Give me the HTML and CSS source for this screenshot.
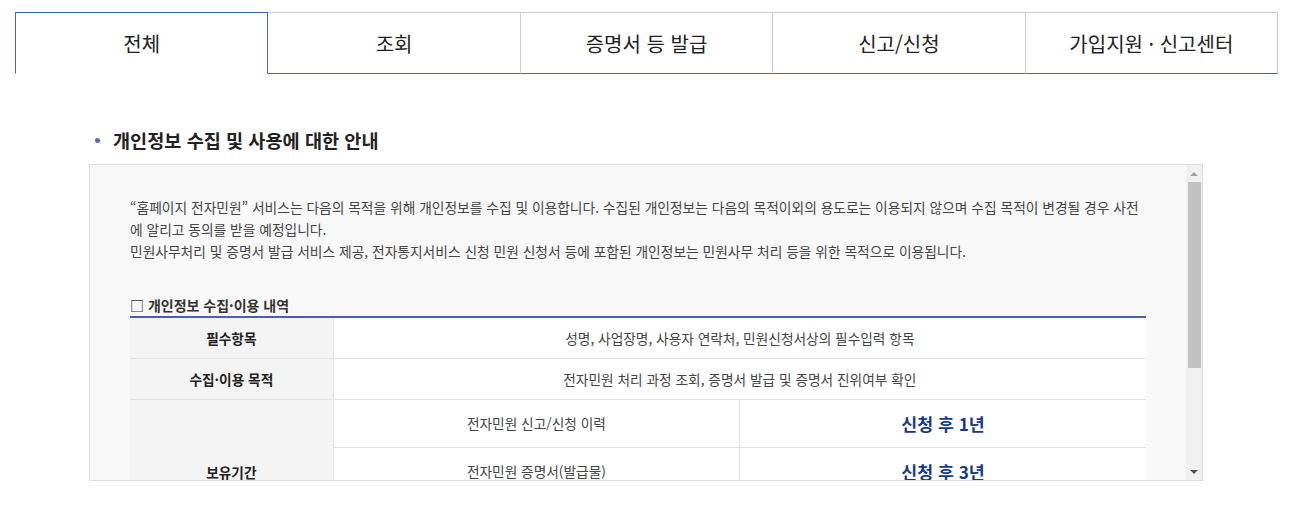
FILE: index.html
```html
<!DOCTYPE html>
<html lang="ko">
<head>
  <meta charset="UTF-8">
  <meta name="viewport" content="width=device-width, initial-scale=1.0">
  <title>개인정보 수집 및 사용에 대한 안내</title>
  <link rel="stylesheet" href="styles.css">
</head>
<body>
  <div class="wrap">
    <ul class="tabs">
      <li class="tab active">전체</li>
      <li class="tab">조회</li>
      <li class="tab">증명서 등 발급</li>
      <li class="tab">신고/신청</li>
      <li class="tab">가입지원 · 신고센터</li>
    </ul>

    <div class="section">
      <h3 class="title"><span class="dot"></span>개인정보 수집 및 사용에 대한 안내</h3>

      <div class="agree-box">
        <div class="agree-scroll">
          <p class="intro">“홈페이지 전자민원” 서비스는 다음의 목적을 위해 개인정보를 수집 및 이용합니다. 수집된 개인정보는 다음의 목적이외의 용도로는 이용되지 않으며 수집 목적이 변경될 경우 사전에 알리고 동의를 받을 예정입니다.<br>
          민원사무처리 및 증명서 발급 서비스 제공, 전자통지서비스 신청 민원 신청서 등에 포함된 개인정보는 민원사무 처리 등을 위한 목적으로 이용됩니다.</p>

          <h4 class="tbl-title">□ 개인정보 수집·이용 내역</h4>
          <table class="tbl">
            <colgroup>
              <col class="c1">
              <col class="c2">
              <col class="c3">
            </colgroup>
            <tbody>
              <tr>
                <th>필수항목</th>
                <td colspan="2">성명, 사업장명, 사용자 연락처, 민원신청서상의 필수입력 항목</td>
              </tr>
              <tr>
                <th>수집·이용 목적</th>
                <td colspan="2">전자민원 처리 과정 조회, 증명서 발급 및 증명서 진위여부 확인</td>
              </tr>
              <tr class="sub">
                <th rowspan="3">보유기간</th>
                <td>전자민원 신고/신청 이력</td>
                <td class="period">신청 후 1년</td>
              </tr>
              <tr class="sub">
                <td>전자민원 증명서(발급물)</td>
                <td class="period">신청 후 3년</td>
              </tr>
              <tr class="sub">
                <td>전자통지서비스 신청 내역</td>
                <td class="period">해지 시까지</td>
              </tr>
            </tbody>
          </table>

          <p class="note">※ 위의 개인정보 수집·이용에 대한 동의를 거부할 권리가 있습니다.<br>
          그러나 동의를 거부할 경우 전자민원 서비스 이용이 제한될 수 있습니다.</p>
        </div>

        <div class="scrollbar">
          <span class="arrow up"></span>
          <div class="track"><span class="thumb"></span></div>
          <span class="arrow down"></span>
        </div>
      </div>
    </div>
  </div>
</body>
</html>
```

FILE: styles.css
```css
* {
  box-sizing: border-box;
}

body {
  margin: 0;
  font-family: "Noto Sans CJK KR", "Noto Sans", sans-serif;
  color: #222;
  background: #fff;
}

.wrap {
  padding: 12px 18px 0 15px;
}

.tabs {
  display: flex;
  list-style: none;
  margin: 0;
  padding: 0;
}

.tab {
  flex: 1 1 0;
  height: 62px;
  display: flex;
  align-items: center;
  justify-content: center;
  font-size: 20px;
  color: #222;
  border-top: 1px solid #ccc;
  border-right: 1px solid #ccc;
  border-bottom: 1px solid #3b67bd;
}

.tab.active {
  border: 1px solid #3b67bd;
  border-bottom-color: #fff;
}

.section {
  margin: 53px 75px 0 74px;
}

.title {
  display: flex;
  align-items: center;
  margin: 0 0 11px;
  padding-left: 6px;
  font-size: 18.6px;
  line-height: 26px;
  font-weight: bold;
  color: #222;
}

.dot {
  width: 5px;
  height: 5px;
  border-radius: 50%;
  background: #5868b4;
  margin-right: 13px;
}

/* agreement box with a drawn scrollbar */
.agree-box {
  display: flex;
  height: 317px;
  border: 1px solid #ddd;
  background: #f8f8f8;
}

.agree-scroll {
  flex: 1;
  overflow: hidden;
  padding: 31px 40px 40px 40px;
}

.scrollbar {
  width: 16px;
  display: flex;
  flex-direction: column;
  background: #f1f1f1;
}

.arrow {
  height: 17px;
  display: flex;
  align-items: center;
  justify-content: center;
}

.arrow::before {
  content: "";
  border-left: 4px solid transparent;
  border-right: 4px solid transparent;
}

.arrow.up::before {
  border-bottom: 4px solid #a3a3a3;
}

.arrow.down::before {
  border-top: 4px solid #505050;
}

.track {
  flex: 1;
  padding: 0 1px 0 2px;
}

.thumb {
  display: block;
  height: 186px;
  background: #c1c1c1;
}

.intro {
  margin: 0;
  font-size: 13.75px;
  line-height: 22px;
  color: #444;
}

.tbl-title {
  margin: 32px 0 0;
  font-size: 14px;
  line-height: 22px;
  font-weight: bold;
  color: #333;
}

.tbl {
  width: 100%;
  border-collapse: collapse;
  table-layout: fixed;
  border-top: 2px solid #4a5fb3;
  font-size: 13.7px;
}

.c1 {
  width: 20%;
}

.c2,
.c3 {
  width: 40%;
}

.tbl th,
.tbl td {
  padding: 10px;
  line-height: 20px;
  text-align: center;
  border-bottom: 1px solid #e2e2e2;
}

.tbl th {
  background: #f4f4f4;
  font-weight: bold;
  color: #222;
  border-right: 1px solid #e2e2e2;
}

.tbl td {
  background: #fff;
  color: #444;
}

.tbl .sub td {
  padding: 12px 10px;
  line-height: 23px;
}

.tbl .sub td + td {
  border-left: 1px solid #e2e2e2;
}

.tbl .period {
  font-size: 17.3px;
  font-weight: bold;
  color: #173a7e;
}

.note {
  margin: 16px 0 0;
  font-size: 13.7px;
  line-height: 22px;
  color: #444;
}
```
